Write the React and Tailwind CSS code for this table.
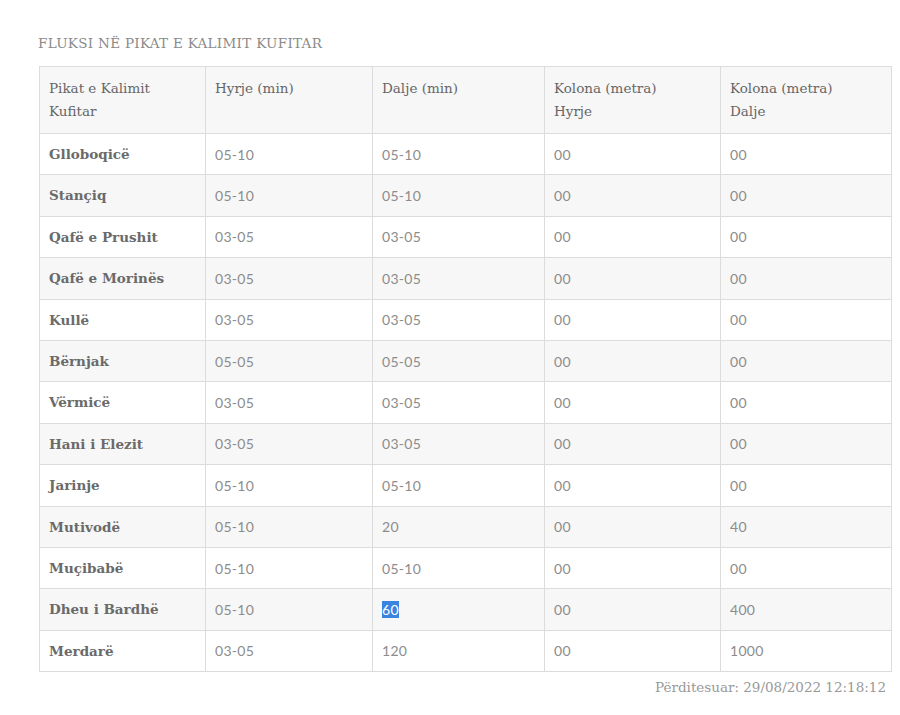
import React from 'react';

const rows = [
  ['Glloboqicë', '05-10', '05-10', '00', '00'],
  ['Stançiq', '05-10', '05-10', '00', '00'],
  ['Qafë e Prushit', '03-05', '03-05', '00', '00'],
  ['Qafë e Morinës', '03-05', '03-05', '00', '00'],
  ['Kullë', '03-05', '03-05', '00', '00'],
  ['Bërnjak', '05-05', '05-05', '00', '00'],
  ['Vërmicë', '03-05', '03-05', '00', '00'],
  ['Hani i Elezit', '03-05', '03-05', '00', '00'],
  ['Jarinje', '05-10', '05-10', '00', '00'],
  ['Mutivodë', '05-10', '20', '00', '40'],
  ['Muçibabë', '05-10', '05-10', '00', '00'],
  ['Dheu i Bardhë', '05-10', '60', '00', '400'],
  ['Merdarë', '03-05', '120', '00', '1000'],
];

const slab = { fontFamily: '"DejaVu Serif", "Liberation Serif", serif' };
const sans = { fontFamily: 'Lato, "Open Sans", sans-serif' };

export default function App() {
  return (
    <div className="w-[900px] h-[715px] bg-white">
      <div className="ml-[39px] w-[852px] pt-[33px]">
        <h2 style={slab} className="text-[13.5px] leading-[20px] text-[#8a8a8a] font-light tracking-[0.3px] mb-[13px] -ml-px">
          FLUKSI NË PIKAT E KALIMIT KUFITAR
        </h2>
        <table className="w-full border-collapse table-fixed border border-[#dcdcdc]">
          <colgroup>
            <col className="w-[166px]" />
            <col className="w-[167px]" />
            <col className="w-[172px]" />
            <col className="w-[176px]" />
            <col className="w-[171px]" />
          </colgroup>
          <thead>
            <tr className="bg-[#f7f7f7]">
              {['Pikat e Kalimit Kufitar', 'Hyrje (min)', 'Dalje (min)', 'Kolona (metra) Hyrje', 'Kolona (metra) Dalje'].map((h, i) => (
                <th key={i} style={slab} className="border border-[#dcdcdc] text-left align-top font-normal text-[13.5px] leading-[23px] text-[#666] px-[9px] pt-[10px] pb-[10px] h-[66px]">
                  {i === 0 ? <>Pikat e Kalimit<br />Kufitar</> : i === 3 ? <>Kolona (metra)<br />Hyrje</> : i === 4 ? <>Kolona (metra)<br />Dalje</> : h}
                </th>
              ))}
            </tr>
          </thead>
          <tbody>
            {rows.map((r, ri) => (
              <tr key={ri} className={ri % 2 === 1 ? 'bg-[#f7f7f7]' : 'bg-white'}>
                <td style={slab} className="border border-[#dcdcdc] px-[9px] h-[41.4px] text-[13.5px] font-bold text-[#6a6a6a]">
                  {r[0]}
                </td>
                {r.slice(1).map((v, ci) => (
                  <td key={ci} style={sans} className="border border-[#dcdcdc] px-[9px] h-[41.4px] text-[14px] text-[#8c8c8c] tracking-[0.3px]">
                    {ri === 11 && ci === 1 ? <span className="bg-[#3a84e0] text-white">{v}</span> : v}
                  </td>
                ))}
              </tr>
            ))}
          </tbody>
        </table>
        <div style={slab} className="text-right text-[13.5px] text-[#999] pr-[5px] mt-[5px]">
          Përditesuar: 29/08/2022 12:18:12
        </div>
      </div>
    </div>
  );
}
